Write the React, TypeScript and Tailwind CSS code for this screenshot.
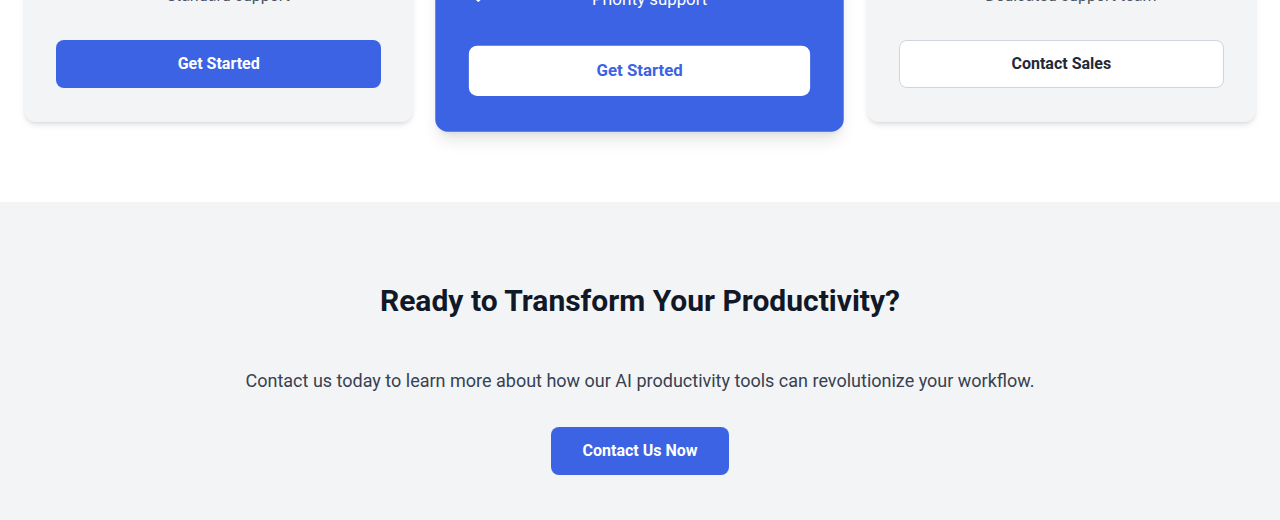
import { Check } from "lucide-react";

type Plan = {
  name: string;
  price: string;
  features: string[];
  cta: string;
  featured?: boolean;
  outline?: boolean;
};

const plans: Plan[] = [
  {
    name: "Basic",
    price: "$19",
    features: ["Core AI tools", "5 projects", "Email reports", "Standard support"],
    cta: "Get Started",
  },
  {
    name: "Pro",
    price: "$49",
    features: ["All AI tools", "Unlimited projects", "Advanced analytics", "Priority support"],
    cta: "Get Started",
    featured: true,
  },
  {
    name: "Enterprise",
    price: "Custom",
    features: ["Custom integrations", "SSO & security", "Onboarding", "Dedicated support team"],
    cta: "Contact Sales",
    outline: true,
  },
];

function PlanCard({ plan }: { plan: Plan }) {
  const featured = plan.featured;
  return (
    <div
      className={
        featured
          ? "bg-[#3b63e3] text-white rounded-xl shadow-lg px-8 pt-8 pb-[34px] scale-105"
          : "bg-[#f3f4f6] rounded-xl shadow-md px-8 pt-8 pb-[34px]"
      }
    >
      <h3 className={featured ? "text-2xl font-bold mb-4 text-center" : "text-2xl font-bold mb-4 text-center text-[#111827]"}>
        {plan.name}
      </h3>
      <div className="text-4xl font-bold mb-6 text-center">{plan.price}</div>
      <ul className="space-y-3 mb-8">
        {plan.features.map((f) => (
          <li key={f} className="flex items-start">
            <Check
              className={featured ? "w-4 h-4 ml-[3px] mt-[2px] text-white" : "w-4 h-4 ml-[3px] mt-[2px] text-[#22c55e]"}
              strokeWidth={3}
            />
            <span className={featured ? "flex-1 text-center text-white" : "flex-1 text-center text-[#4b5563]"}>
              {f}
            </span>
          </li>
        ))}
      </ul>
      <button
        className={
          featured
            ? "w-full h-12 rounded-lg bg-white text-[#3b63e3] font-bold"
            : plan.outline
            ? "w-full h-12 rounded-lg bg-white border border-[#d1d5db] text-[#1f2937] font-bold"
            : "w-full h-12 rounded-lg bg-[#3b63e3] text-white font-bold"
        }
      >
        {plan.cta}
      </button>
    </div>
  );
}

export default function App() {
  return (
    <div className="h-[520px] overflow-hidden bg-white font-['Roboto',sans-serif]">
      <section className="-mt-[348px] py-20 px-6">
        <div className="grid grid-cols-3 gap-8 items-center">
          {plans.map((p) => (
            <PlanCard key={p.name} plan={p} />
          ))}
        </div>
      </section>

      <section className="bg-[#f3f4f6] pt-[81px] pb-20 px-6 text-center">
        <h2 className="text-3xl font-bold text-[#111827] mb-12">
          Ready to Transform Your Productivity?
        </h2>
        <p className="text-lg text-[#374151] mb-8">
          Contact us today to learn more about how our AI productivity tools can revolutionize your workflow.
        </p>
        <button className="px-8 py-3 rounded-lg bg-[#3b63e3] text-white font-bold">
          Contact Us Now
        </button>
      </section>
    </div>
  );
}
